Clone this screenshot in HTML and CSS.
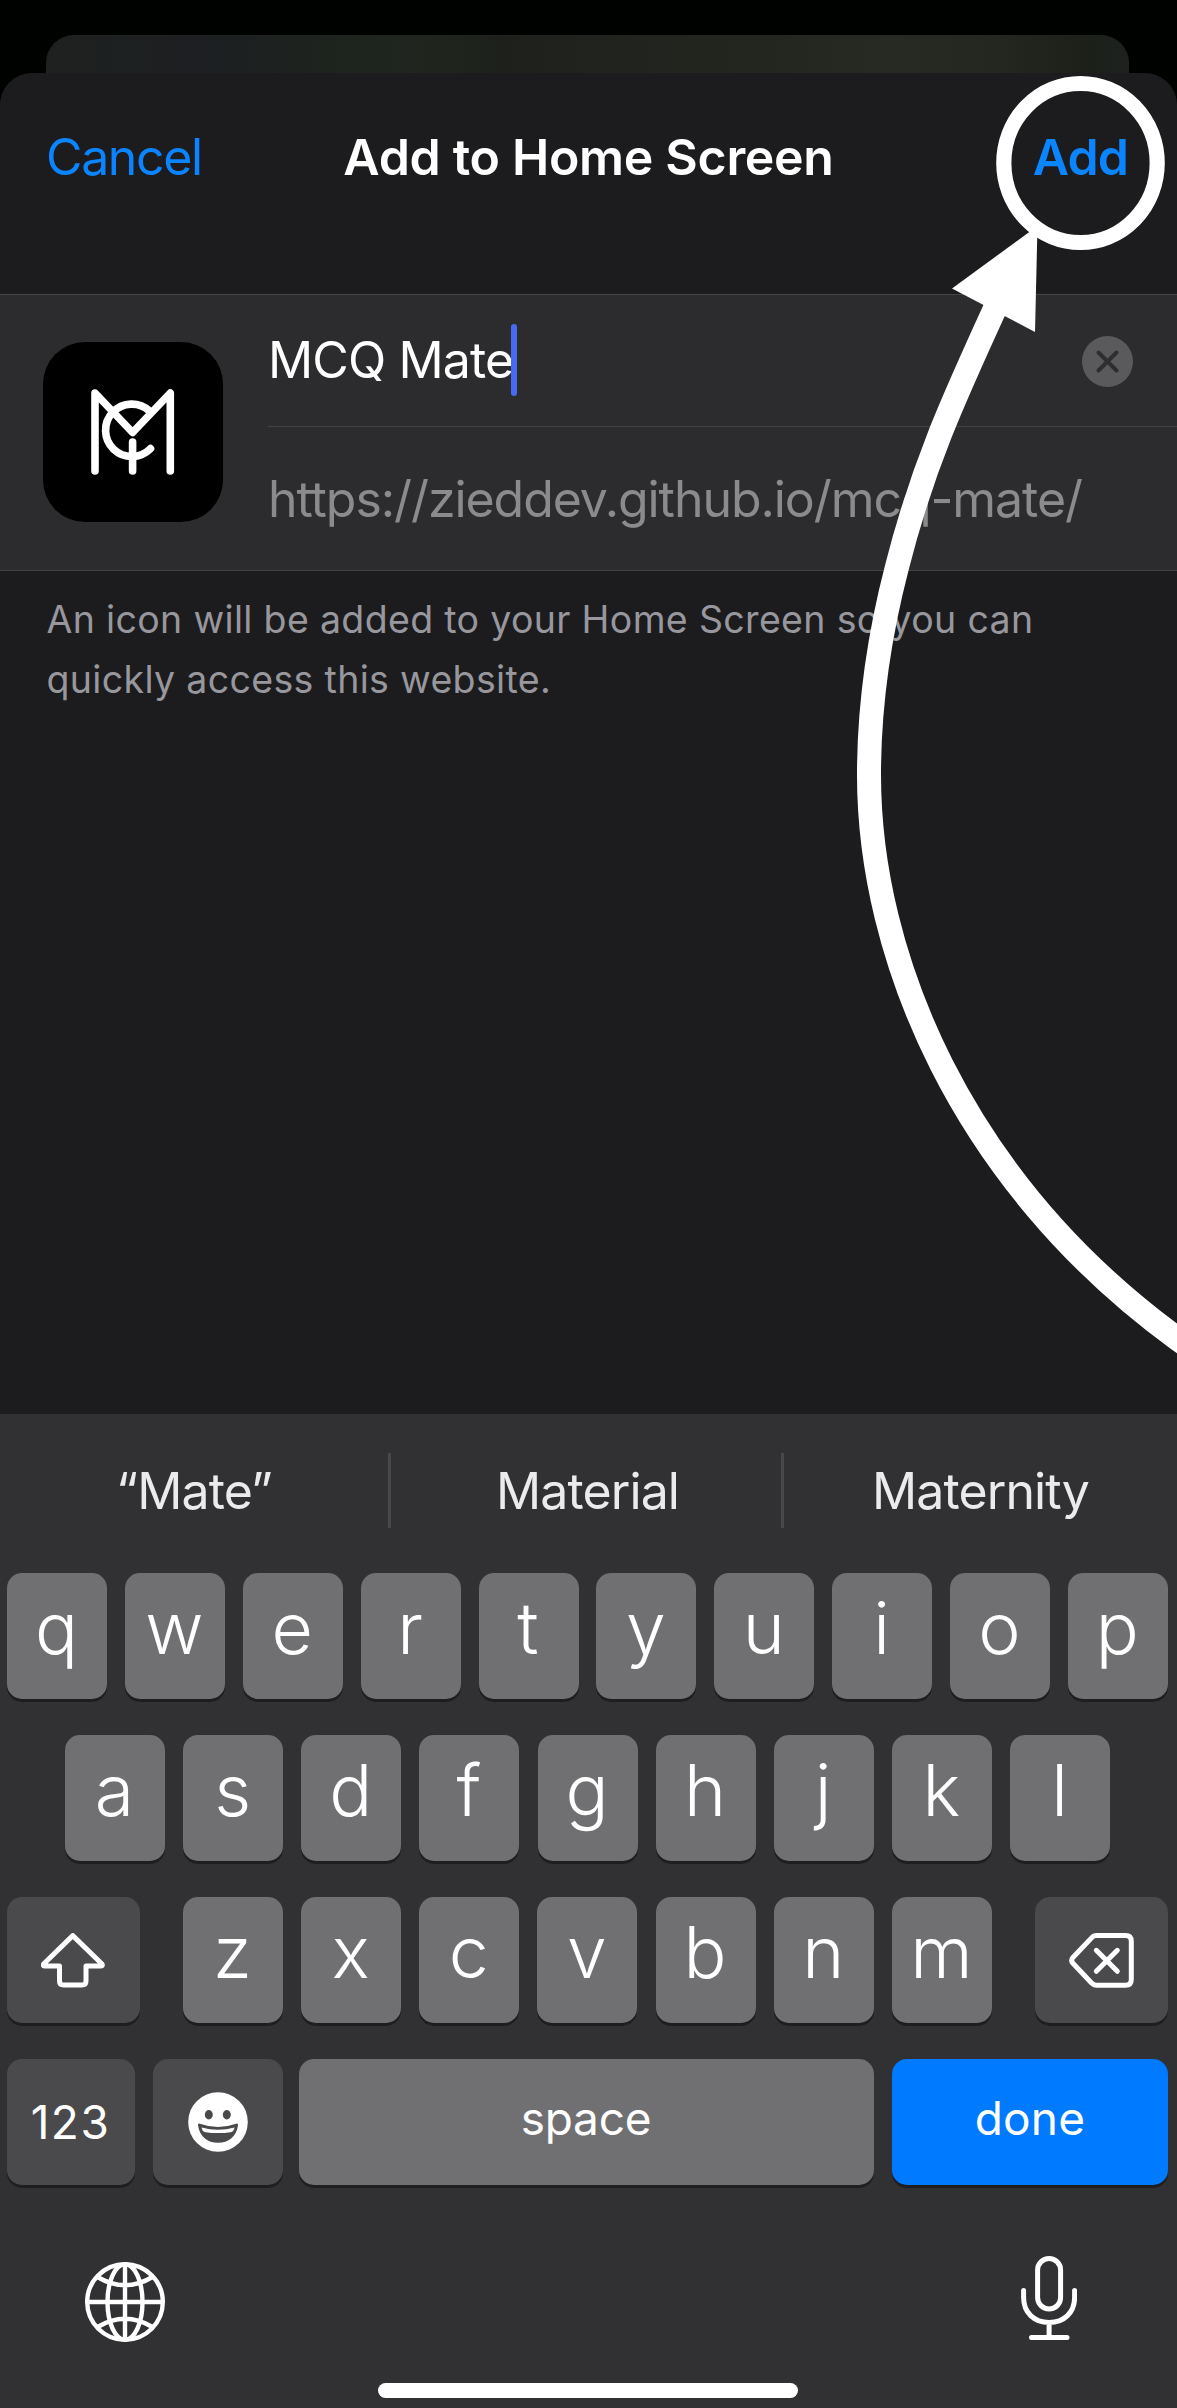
FILE: index.html
```html
<!DOCTYPE html>
<html lang="en">
<head>
<meta charset="utf-8">
<title>Add to Home Screen</title>
<link rel="stylesheet" href="styles.css">
</head>
<body>
<div class="screen">
  <div class="backdrop"></div>

  <main class="sheet">
    <header class="navbar">
      <a class="nav-link cancel">Cancel</a>
      <h1 class="title">Add to Home Screen</h1>
      <a class="nav-link add">Add</a>
    </header>

    <section class="card">
      <div class="app-icon">
        <svg viewBox="0 0 180 180" width="180" height="180" fill="none" stroke="#fff" stroke-width="7.6" stroke-linecap="round" stroke-linejoin="round">
          <path d="M52 129V51L89.6 90.5 127.3 51V129"/>
          <path d="M106.5 69A26.2 26.2 0 1 0 107.5 106.6"/>
          <path d="M89.6 100V129"/>
        </svg>
      </div>
      <div class="fields">
        <div class="field name-field">
          <span class="name">MCQ Mate</span><span class="caret"></span>
          <svg class="clear" viewBox="0 0 51 51" width="51" height="51">
            <circle cx="25.5" cy="25.5" r="25.5" fill="#5a5a5c"/>
            <path d="M16.5 16.5l18 18M34.5 16.5l-18 18" stroke="#2e2e30" stroke-width="4" stroke-linecap="round"/>
          </svg>
        </div>
        <div class="field url">https://zieddev.github.io/mcq-mate/</div>
      </div>
    </section>

    <p class="note">An icon will be added to your Home Screen so you can<br>quickly access this website.</p>
  </main>

  <section class="keyboard">
    <div class="suggestions">
      <span>“Mate”</span><i></i><span class="middle">Material</span><i></i><span>Maternity</span>
    </div>

    <div class="keys">
      <div class="row row-1">
        <b class="key">q</b><b class="key">w</b><b class="key">e</b><b class="key">r</b><b class="key">t</b><b class="key">y</b><b class="key">u</b><b class="key">i</b><b class="key">o</b><b class="key">p</b>
      </div>
      <div class="row row-2">
        <b class="key">a</b><b class="key">s</b><b class="key">d</b><b class="key">f</b><b class="key">g</b><b class="key">h</b><b class="key">j</b><b class="key">k</b><b class="key">l</b>
      </div>
      <div class="row row-3">
        <b class="key dark wide">
          <svg viewBox="0 0 64 55" width="64" height="55" fill="none" stroke="#fff" stroke-width="5" stroke-linejoin="round"><path d="M31.8 2.6L61 31Q62 33 60 33H45V48Q45 52 41 52H22.5Q18.5 52 18.5 48V33H3.5Q1.6 33 2.6 31Z"/></svg>
        </b>
        <div class="letters">
          <b class="key">z</b><b class="key">x</b><b class="key">c</b><b class="key">v</b><b class="key">b</b><b class="key">n</b><b class="key">m</b>
        </div>
        <b class="key dark wide">
          <svg viewBox="0 0 65 55" width="65" height="55" fill="none" stroke="#fff" stroke-width="5" stroke-linecap="round" stroke-linejoin="round"><path d="M27 2.6H56.5Q62.3 2.6 62.3 8.4V46.4Q62.3 52.2 56.5 52.2H27Q24.5 52.2 22.8 50.2L3.7 30Q1.7 27.4 3.7 24.8L22.8 4.6Q24.5 2.6 27 2.6Z"/><path d="M27.3 17.3L48.3 38.3M48.3 17.3L27.3 38.3"/></svg>
        </b>
      </div>
      <div class="row row-4">
        <b class="key dark numbers">123</b>
        <b class="key dark emoji">
          <svg viewBox="0 0 60 60" width="60" height="60">
            <circle cx="30" cy="30" r="29.8" fill="#fff"/>
            <g fill="#4a4a4c"><ellipse cx="20.8" cy="22.8" rx="4" ry="4.7"/><ellipse cx="38.8" cy="22.8" rx="4" ry="4.7"/>
            <path d="M11 31.5Q30 38.4 49 31.5Q50.2 31.6 50 33.2C48.5 44.700 40.5 50.8 30 50.8S11.5 44.7 10 33.2Q9.8 31.6 11 31.5Z"/></g>
            <path d="M13.6 35.4Q30 40 46.600 35.4Q46 39.6 42.5 40.2Q30 42 17.5 40.2Q14 39.6 13.6 35.4Z" fill="#fff"/>
          </svg>
        </b>
        <b class="key space">space</b>
        <b class="key done">done</b>
      </div>
    </div>

    <div class="bottom-bar">
      <svg class="globe" viewBox="0 0 80 80" width="80" height="80" fill="none" stroke="#fff" stroke-width="4.4">
        <circle cx="40" cy="40" r="37.8"/>
        <ellipse cx="40" cy="40" rx="17.5" ry="37.8"/>
        <path d="M40 2V78M2 40H78M12.5 15Q40 31.500 67.5 15M12.5 65Q40 48.5 67.5 65"/>
      </svg>
      <svg class="mic" viewBox="0 0 56 84" width="56" height="84" fill="none" stroke="#fff" stroke-width="5" stroke-linecap="round">
        <rect x="16.6" y="2.5" width="23" height="50.5" rx="11.5"/>
        <path d="M2.6 34.5V41.5C2.6 56.5 13 66.500 28.1 66.5S53.6 56.5 53.6 41.5V34.5M28.1 66.5V81.500M10.5 81.500H46"/>
      </svg>
    </div>
    <div class="home-indicator"></div>
  </section>

  <svg class="annotation" viewBox="0 0 1177 2408" width="1177" height="2408" fill="none" stroke="#fff">
    <ellipse cx="1080.5" cy="163" rx="76.7" ry="79.5" stroke-width="15.2"/>
    <path d="M998 302C953 400 922 468 897 567C878 640 869 705 869 775C869 955 960 1180 1177 1338.500L1197 1353" stroke-width="24"/>
    <path d="M1037.5 226L952 288.500L1035 332Z" fill="#fff" stroke="none"/>
  </svg>
</div>
</body>
</html>
```
FILE: styles.css
```css
* { box-sizing: border-box; }

body {
  margin: 0;
  background: #000;
  font-family: "Inter", "Liberation Sans", sans-serif;
  font-size: 50px;
  font-weight: 400;
  color: #fff;
}

.screen {
  position: relative;
  display: flex;
  flex-direction: column;
  width: 1177px;
  height: 2408px;
  padding-top: 35px;
  background: #000200;
  overflow: hidden;
}

.backdrop {
  flex: none;
  height: 72px;
  margin: 0 48px -34px 46px;
  border-radius: 28px 28px 0 0;
  background: linear-gradient(90deg, #1e211f 0%, #1d1f22 14%, #1d221e 24%, #20261f 34%, #1e211b 42%, #22241f 56%, #23261f 66%, #272a22 78%, #24271f 88%, #1c2019 96%, #1e211f 100%);
}

/* Sheet */
.sheet {
  height: 1341px;
  border-radius: 32px 32px 0 0;
  background: #1c1c1e;
}

.navbar {
  display: grid;
  grid-template-columns: 1fr auto 1fr;
  height: 221px;
  padding: 44px 48px 0 46px;
  line-height: 80px;
}

.title {
  margin: 0;
  padding-left: 2px;
  font-size: 50px;
  font-weight: 600;
  letter-spacing: -0.31px;
}

.nav-link { color: #0a84ff; }
.cancel { letter-spacing: -1.37px; }
.add { padding-right: 1px; text-align: right; font-weight: 600; letter-spacing: -0.91px; }

.card {
  display: flex;
  align-items: center;
  height: 277px;
  padding-left: 43px;
  border-top: 1px solid #454547;
  border-bottom: 1px solid #424244;
  background: #2c2c2e;
}

.app-icon {
  width: 180px;
  height: 180px;
  margin: 0 45px 1px 0;
  border-radius: 42px;
  background: #000;
}

.app-icon svg { display: block; }
.fields { flex: 1; }

.field {
  display: flex;
  align-items: center;
  height: 132px;
}

.name-field { padding-bottom: 2px; border-bottom: 1px solid #434345; }
.name { letter-spacing: -0.87px; }

.caret {
  width: 6px;
  height: 72px;
  margin-left: -2.5px;
  border-radius: 3px;
  background: #466bf2;
}

.clear { margin: 3px 44px 0 auto; }

.url {
  height: 143px;
  color: #8b8b8d;
  letter-spacing: -1.07px;
}

.note {
  margin: 0;
  padding: 19px 0 0 46.5px;
  color: #97979d;
  font-size: 37.5px;
  line-height: 60px;
  letter-spacing: 0.335px;
}

/* Keyboard */
.keyboard {
  flex: 1;
  background: #313133;
}

.suggestions {
  display: grid;
  grid-template-columns: 388px 3px 390px 3px 1fr;
  align-items: center;
  height: 153px;
  color: #ebebed;
  text-align: center;
  letter-spacing: -0.88px;
}

.suggestions i { height: 75px; background: #48484a; }
.middle { padding-left: 3px; }

.keys {
  display: grid;
  grid-auto-rows: 126px;
  row-gap: 36px;
  padding: 6px 9px 0 7px;
}

.row, .letters {
  display: flex;
  justify-content: space-between;
}

.row-2 { padding: 0 58px; }
.letters { width: 809px; }

.key {
  width: 100px;
  padding-right: 1px;
  border-radius: 15px;
  background: #707072;
  box-shadow: 0 3px 0 #1e1e20;
  font-size: 71.5px;
  font-weight: 340;
  line-height: 110px;
  text-align: center;
}

.dark {
  display: flex;
  align-items: center;
  justify-content: center;
  background: #4a4a4c;
}

.wide { width: 133px; }
.numbers { width: 128px; font-size: 46px; font-weight: 400; letter-spacing: 1.5px; }
.emoji { width: 130px; margin-right: -2px; }
.space, .done { font-size: 46px; font-weight: 380; line-height: 118px; }
.space { width: 575px; letter-spacing: -0.25px; }
.done { width: 276px; padding-right: 0; letter-spacing: 0.25px; background: #007aff; }

.bottom-bar {
  display: flex;
  justify-content: space-between;
  align-items: flex-start;
  height: 198px;
  padding: 71px 100px 0 85px;
}

.globe { margin-top: 6px; }

.home-indicator {
  width: 420px;
  height: 15px;
  margin-left: 378px;
  border-radius: 8px;
  background: #fff;
}

/* Arrow and circle drawn over the screen */
.annotation {
  position: absolute;
  top: 0;
  left: 0;
}
```
